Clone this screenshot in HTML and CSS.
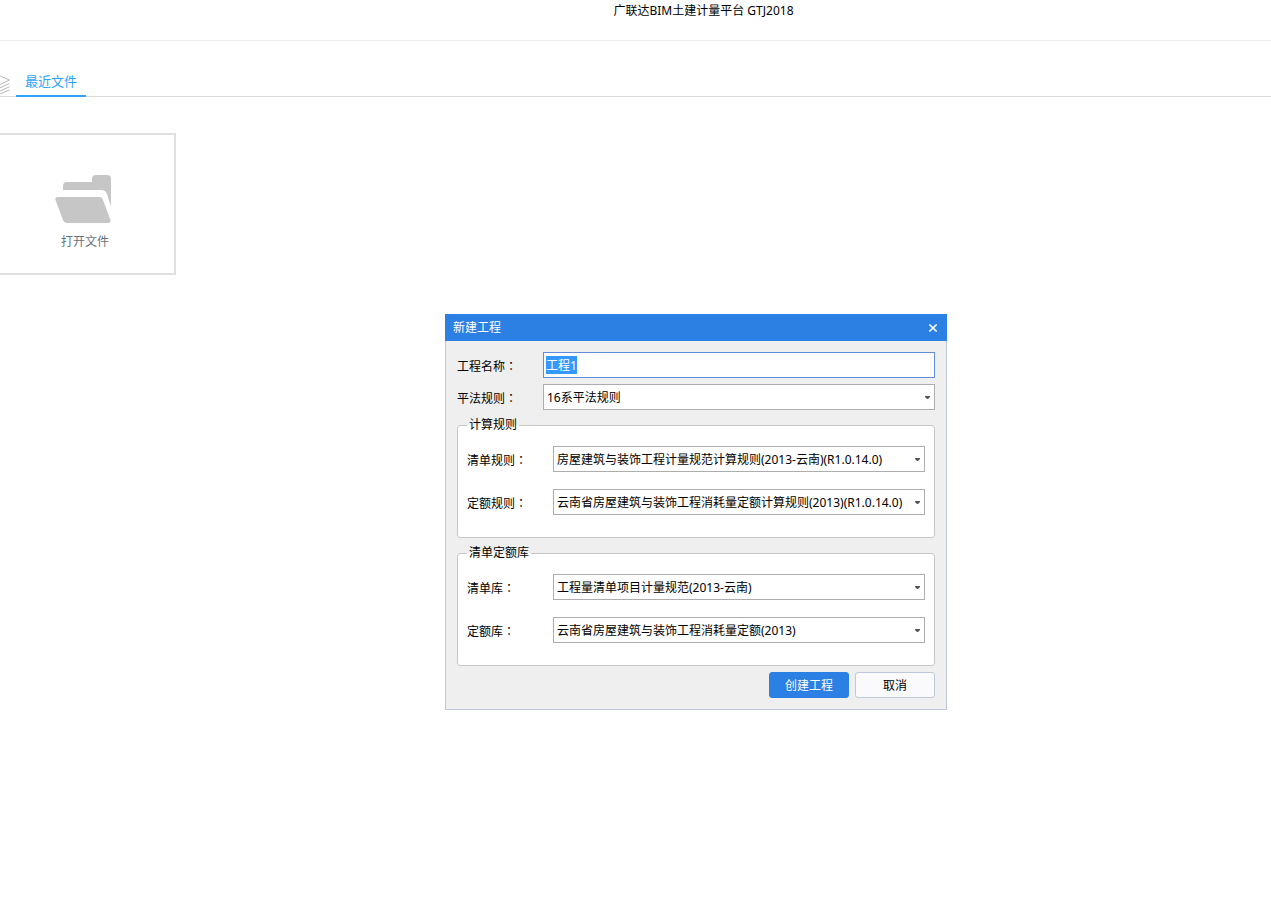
FILE: index.html
```
<!DOCTYPE html>
<html lang="zh-CN">
<head>
<meta charset="utf-8">
<title>广联达BIM土建计量平台 GTJ2018</title>
<link rel="stylesheet" href="styles.css">
</head>
<body>
<header class="titlebar"><h1 class="app-title">广联达BIM土建计量平台 GTJ2018</h1></header>
<nav class="tabs">
  <svg class="stack-icon" width="10" height="22" viewBox="0 0 10 22" fill="none" stroke="#b8b8b8" aria-hidden="true">
    <path d="M0 4 9.500 8 0 12.500M9.500 11.500 0 15.800M9.500 14.800 0 19M9.500 18 0 22"/>
  </svg>
  <a class="tab" href="#recent">最近文件</a>
</nav>
<main class="files" id="recent">
  <button class="open-card" type="button">
    <svg width="56" height="48" viewBox="0 0 56 48" fill="#c6c6c6" aria-hidden="true">
      <path d="M8 15V11Q8 7 12 7H37V4Q37 0 41 0H52Q56 0 56 4V32L52 19Q50.500 15 46 15Z"/>
      <path d="M3 22H44Q47 22 48 25L55.500 45Q56.500 48 53 48H12Q9 48 8 45L.5 25Q-.5 22 3 22Z"/>
    </svg>
    <span>打开文件</span>
  </button>
</main>
<section class="dialog" role="dialog" aria-labelledby="dialog-title">
  <header class="dialog-head">
    <h2 class="dialog-title" id="dialog-title">新建工程</h2>
    <button class="close" type="button" aria-label="关闭">
      <svg width="8" height="8" viewBox="0 0 8 8" fill="none" stroke="#fff" stroke-width="1.600"><path d="M.3.5 7.700 7.500M7.700.5.3 7.500"/></svg>
    </button>
  </header>
  <form class="dialog-body">
    <div class="row">
      <label for="name">工程名称<span class="colon" lang="zh-TW">：</span></label>
      <input class="field name" id="name" type="text" value="工程1">
    </div>
    <div class="row">
      <label for="rule">平法规则<span class="colon" lang="zh-TW">：</span></label>
      <div class="combo"><select class="field" id="rule"><option>16系平法规则</option></select><svg class="arrow" width="5" height="3" viewBox="0 0 5 3"><path d="M0 0H5V1L3 3H2L0 1Z"/></svg></div>
    </div>
    <fieldset class="group">
      <legend>计算规则</legend>
      <div class="row">
        <label for="list-rule">清单规则<span class="colon" lang="zh-TW">：</span></label>
        <div class="combo"><select class="field" id="list-rule"><option>房屋建筑与装饰工程计量规范计算规则(2013-云南)(R1.0.14.0)</option></select><svg class="arrow" width="5" height="3" viewBox="0 0 5 3"><path d="M0 0H5V1L3 3H2L0 1Z"/></svg></div>
      </div>
      <div class="row">
        <label for="quota-rule">定额规则<span class="colon" lang="zh-TW">：</span></label>
        <div class="combo"><select class="field" id="quota-rule"><option>云南省房屋建筑与装饰工程消耗量定额计算规则(2013)(R1.0.14.0)</option></select><svg class="arrow" width="5" height="3" viewBox="0 0 5 3"><path d="M0 0H5V1L3 3H2L0 1Z"/></svg></div>
      </div>
    </fieldset>
    <fieldset class="group">
      <legend>清单定额库</legend>
      <div class="row">
        <label for="list-lib">清单库<span class="colon" lang="zh-TW">：</span></label>
        <div class="combo"><select class="field" id="list-lib"><option>工程量清单项目计量规范(2013-云南)</option></select><svg class="arrow" width="5" height="3" viewBox="0 0 5 3"><path d="M0 0H5V1L3 3H2L0 1Z"/></svg></div>
      </div>
      <div class="row">
        <label for="quota-lib">定额库<span class="colon" lang="zh-TW">：</span></label>
        <div class="combo"><select class="field" id="quota-lib"><option>云南省房屋建筑与装饰工程消耗量定额(2013)</option></select><svg class="arrow" width="5" height="3" viewBox="0 0 5 3"><path d="M0 0H5V1L3 3H2L0 1Z"/></svg></div>
      </div>
    </fieldset>
    <div class="actions">
      <button class="btn primary" type="submit">创建工程</button>
      <button class="btn" type="button">取消</button>
    </div>
  </form>
</section>
<script src="main.js"></script>
</body>
</html>
```
FILE: styles.css
```
* { box-sizing: border-box; }
body {
  margin: 0;
  background: #fff;
  color: #000;
  font: 12px/18px "Noto Sans", "Noto Sans CJK SC", sans-serif;
}
button, input, select { font: inherit; color: inherit; margin: 0; }
svg { display: block; }
h1, h2 { margin: 0; font-size: 12px; font-weight: 400; }
.titlebar {
  height: 41px;
  padding: 2px 0 0 136px;
  border-bottom: 1px solid #ececec;
  text-align: center;
}
.tabs {
  display: flex;
  align-items: flex-end;
  gap: 6px;
  height: 56px;
  border-bottom: 1px solid #dadada;
}
.stack-icon { margin-bottom: 2px; }
.tab {
  height: 26px;
  margin-bottom: -1px;
  padding: 1px 9px 0;
  border-bottom: 2px solid #2ea3fb;
  color: #2ea3fb;
  font-size: 13px;
  text-decoration: none;
}
.files { padding-top: 36px; }
.open-card {
  display: flex;
  flex-direction: column;
  align-items: center;
  gap: 10px;
  width: 176px;
  height: 142px;
  padding: 40px 4px 0 0;
  border: 2px solid #e0e0e0;
  border-left: 0;
  background: #fff;
  color: #69727c;
}
.open-card svg { margin-right: 4px; }
.dialog {
  position: absolute;
  top: 314px;
  left: 445px;
  width: 502px;
  border: 1px solid #bec8d8;
  border-top: 0;
  background: #efefef;
}
.dialog-head {
  display: flex;
  align-items: center;
  justify-content: space-between;
  height: 27px;
  margin: 0 -1px;
  padding: 0 8px;
  background: #2d80e3;
  color: #fff;
}
.close { padding: 2px; border: 0; background: none; }
.dialog-body { padding: 11px; }
.row { display: flex; align-items: center; }
.row label { flex: none; width: 86px; padding-top: 2px; }
.colon { font-family: "Noto Sans CJK TC", sans-serif; }
.row + .row { margin-top: 6px; }
.combo { position: relative; flex: 1; }
.field {
  appearance: none;
  display: block;
  flex: 1;
  width: 100%;
  height: 26px;
  padding: 2px 3px 0;
  border: 1px solid #adadad;
  border-radius: 0;
  background: #fff;
  outline: 0;
}
.name { padding: 0 2px; border-color: #628cd9; }
.name::selection { background: #3399ff; color: #fff; }
.arrow { position: absolute; right: 5px; top: 12px; fill: #555; pointer-events: none; }
.group {
  min-width: 0;
  margin: 7px 0 0;
  padding: 13px 9px 22px;
  border: 1px solid #c6c6c6;
  border-radius: 3px;
  background: #fff;
}
.group legend { height: 16px; padding: 0 2px; line-height: 16px; }
.group .row + .row { margin-top: 17px; }
.actions { display: flex; justify-content: flex-end; gap: 6px; margin-top: 6px; }
.btn {
  width: 80px;
  height: 26px;
  padding: 2px 0 0;
  border: 1px solid #bec8d8;
  border-radius: 3px;
  background: #fafafc;
}
.primary { border-color: #2d80e3; background: #2d80e3; color: #fff; }
```
FILE: main.js
```
const projectName = document.getElementById("name");
projectName.focus();
projectName.select();
```
